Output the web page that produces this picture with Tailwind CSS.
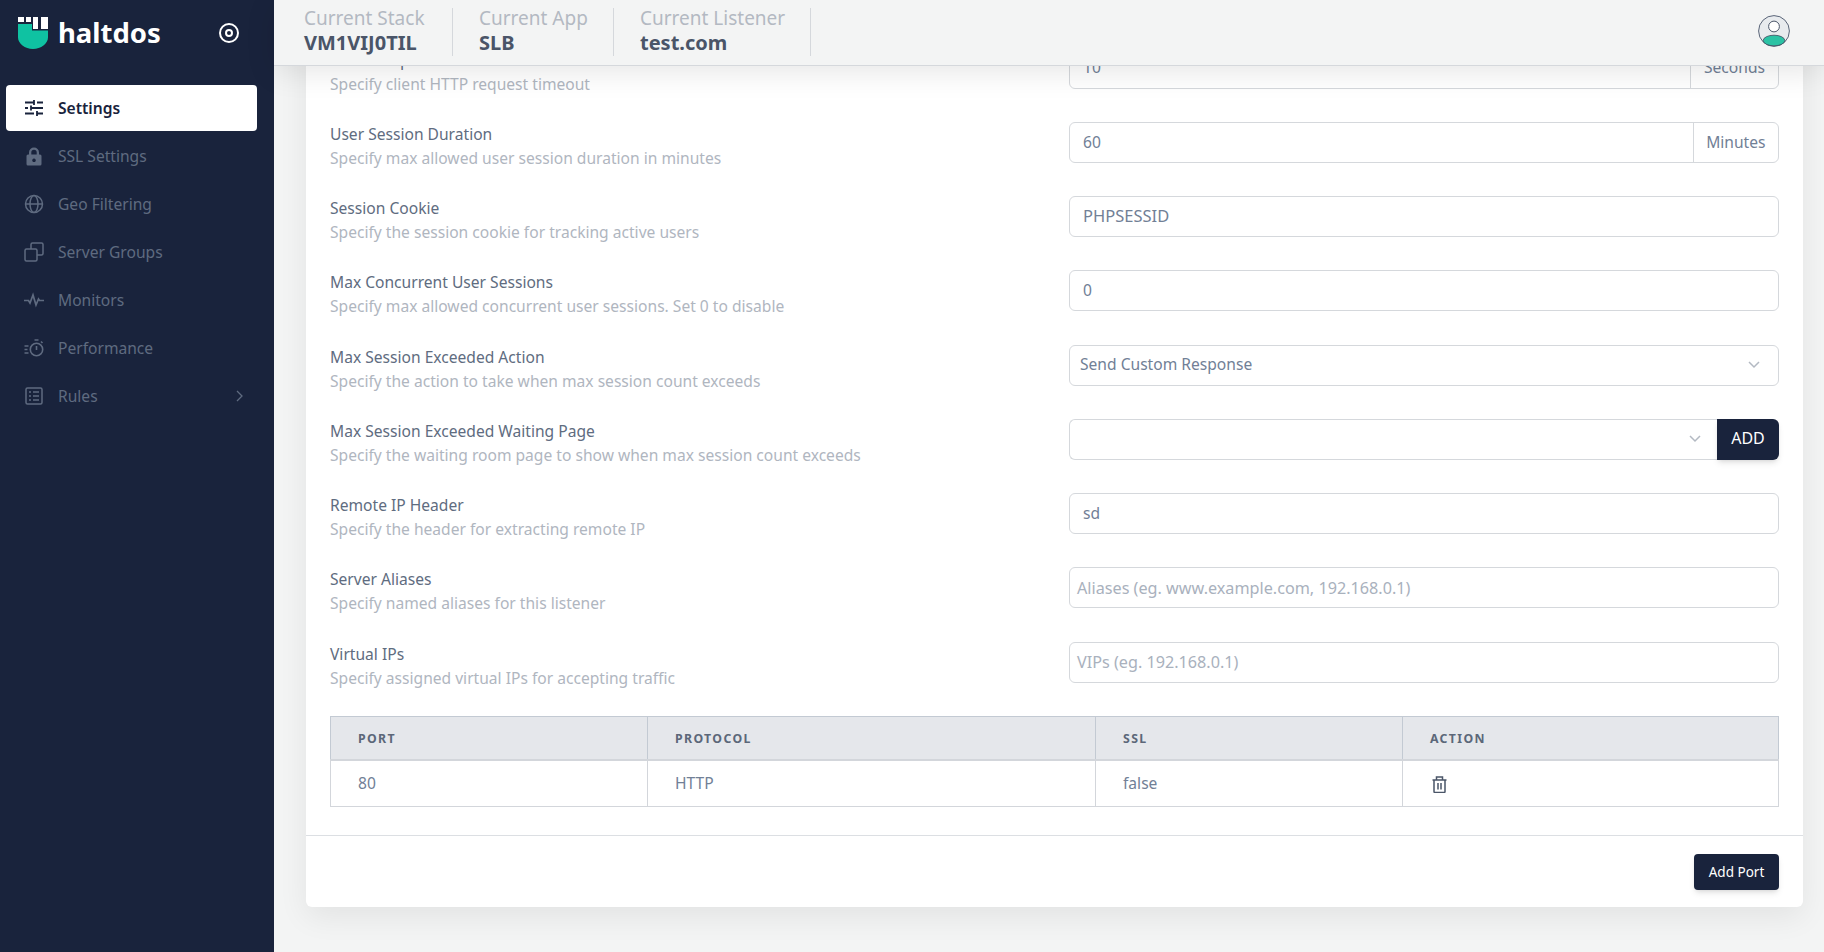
<!DOCTYPE html>
<html lang="en">
<head>
<meta charset="utf-8">
<title>Haltdos</title>
<script src="https://cdn.jsdelivr.net/npm/@tailwindcss/browser@4"></script>
</head>
<body class="font-['Noto_Sans',sans-serif] bg-[#f3f4f4] text-[#4a5568]">
<div class="flex h-[952px] w-[1824px] overflow-hidden">
  <aside class="w-[274px] shrink-0 bg-[#19233c] flex flex-col">
    <div class="h-[65px] flex items-center pl-[17px] pr-[34px]">
      <svg class="w-[32px] h-[34px]" viewBox="0 0 32 34"><path d="M1 1h6v5H1zM9 1h5v5H9zM16 1h5v12h-5zM24 1h7v12h-7z" fill="#fff"/><path d="M1 8h14v6.500h16v7c0 6-7 11.500-15 11.500S1 27.500 1 21.500z" fill="#0fc2a2"/></svg>
      <span class="ml-[9px] text-[27.500px] font-bold text-white leading-none">haltdos</span>
      <svg class="ml-auto w-[22px] h-[22px]" viewBox="0 0 22 22" fill="none" stroke="#fff" stroke-width="2"><circle cx="11" cy="11" r="9"/><circle cx="11" cy="11" r="3"/></svg>
    </div>
    <nav class="mt-[20px] px-[6px] flex flex-col gap-[2px] text-[15.600px] text-[#5f6b80]">
      <a class="h-[46px] w-[251px] rounded bg-white flex items-center px-[18px] gap-[14px] font-semibold text-[#19233c]">
        <svg class="w-[20px] h-[20px]" viewBox="0 0 20 20" fill="none" stroke="currentColor" stroke-width="1.800"><path d="M1 4.500h9M13 4.500h6M10 2v5M1 10h3M7 10h12M7 7.500v5M1 15.500h9M13 15.500h6M13 13v5"/></svg>
        <span class="pt-[1px]">Settings</span></a>
      <a class="h-[46px] flex items-center px-[18px] gap-[14px]">
        <svg class="w-[20px] h-[20px]" viewBox="0 0 20 20" fill="currentColor"><path fill-rule="evenodd" d="M5 8.500V6.500a5 5 0 0 1 10 0v2h1a1.500 1.500 0 0 1 1.500 1.500v8a1.500 1.500 0 0 1-1.500 1.500H4A1.500 1.500 0 0 1 2.500 18v-8A1.500 1.500 0 0 1 4 8.500zm2.300 0h5.400v-2a2.700 2.700 0 0 0-5.400 0zm2.700 4a1.800 1.800 0 1 0 .01 0z"/></svg>
        <span class="pt-[1px]">SSL Settings</span></a>
      <a class="h-[46px] flex items-center px-[18px] gap-[14px]">
        <svg class="w-[20px] h-[20px]" viewBox="0 0 20 20" fill="none" stroke="currentColor" stroke-width="1.500"><circle cx="10" cy="10" r="8.500"/><ellipse cx="10" cy="10" rx="4" ry="8.500"/><path d="M1.500 10h17"/></svg>
        <span class="pt-[1px]">Geo Filtering</span></a>
      <a class="h-[46px] flex items-center px-[18px] gap-[14px]">
        <svg class="w-[20px] h-[20px]" viewBox="0 0 20 20" fill="none" stroke="currentColor" stroke-width="1.500"><rect x="1" y="7" width="12" height="12" rx="1.500"/><path d="M7 7V2.500A1.500 1.500 0 0 1 8.500 1h9A1.500 1.500 0 0 1 19 2.500v9a1.500 1.500 0 0 1-1.500 1.500H13"/></svg>
        <span class="pt-[1px]">Server Groups</span></a>
      <a class="h-[46px] flex items-center px-[18px] gap-[14px]">
        <svg class="w-[20px] h-[20px]" viewBox="0 0 20 20" fill="none" stroke="currentColor" stroke-width="1.700"><path d="M0 10.500h4.500l1.500 2.500 3-8 3 10 2.500-6 1 1.500h4.500"/></svg>
        <span class="pt-[1px]">Monitors</span></a>
      <a class="h-[46px] flex items-center px-[18px] gap-[14px]">
        <svg class="w-[20px] h-[20px]" viewBox="0 0 20 20" fill="none" stroke="currentColor" stroke-width="1.600"><circle cx="12.500" cy="11.500" r="6.200"/><path d="M12.500 8v4M10.500 2h4M17 3.500l1.500 1.500M0.500 8h4M0.500 11.500h3M0.500 15h4"/></svg>
        <span class="pt-[1px]">Performance</span></a>
      <a class="h-[46px] flex items-center px-[18px] gap-[14px]">
        <svg class="w-[20px] h-[20px]" viewBox="0 0 20 20" fill="none" stroke="currentColor" stroke-width="1.500"><rect x="2" y="2" width="16" height="16" rx="1.500"/><path d="M5 6h2M9 6h6M5 10h2M9 10h6M5 14h2M9 14h6"/></svg>
        <span class="pt-[1px]">Rules</span>
        <svg class="ml-auto mr-[5px] w-[10px] h-[14px]" viewBox="0 0 10 14" fill="none" stroke="currentColor" stroke-width="1.300"><path d="M2 2l5 5-5 5"/></svg>
      </a>
    </nav>
  </aside>
  <main class="flex-1 min-w-0 flex flex-col">
    <header class="relative z-10 h-[66px] shrink-0 bg-[#f3f4f4] border-b border-[#d5d8dc] shadow-[0_6px_30px_rgba(0,0,0,0.1)] flex items-start pl-[30px] pr-[34px]">
      <div class="mt-[8px] h-[48px] w-[149px] border-r border-[#d5d8dc] leading-none">
        <div class="text-[19px] leading-[21px] text-[#b3b9c2] h-[25px]">Current Stack</div>
        <div class="text-[20px] font-bold text-[#4a5568]">VM1VIJ0TIL</div>
      </div>
      <div class="mt-[8px] h-[48px] w-[161px] pl-[26px] border-r border-[#d5d8dc] leading-none">
        <div class="text-[19px] leading-[21px] text-[#b3b9c2] h-[25px]">Current App</div>
        <div class="text-[20px] font-bold text-[#4a5568]">SLB</div>
      </div>
      <div class="mt-[8px] h-[48px] w-[197px] pl-[26px] border-r border-[#d5d8dc] leading-none">
        <div class="text-[19px] leading-[21px] text-[#b3b9c2] h-[25px]">Current Listener</div>
        <div class="text-[20px] font-bold text-[#4a5568]">test.com</div>
      </div>
      <svg class="ml-auto mt-[15px] w-[32px] h-[32px]" viewBox="0 0 32 32"><circle cx="16" cy="16" r="15.400" fill="#e8ebee" stroke="#5a6578" stroke-width="1"/><ellipse cx="16" cy="25.500" rx="10.800" ry="5.300" fill="#2bc2a4" stroke="#3d4a5e" stroke-width="0.800"/><circle cx="16" cy="11.500" r="5.400" fill="#fff" stroke="#4a5568" stroke-width="1"/></svg>
    </header>
    <div class="flex-1 min-h-0 overflow-hidden pl-[32px] pr-[21px]">
      <section class="mt-[-45px] h-[886px] bg-white rounded-md shadow-[0_10px_30px_rgba(0,0,0,0.07)]">
        <div class="h-[815px] px-[24px] pt-[26.600px] border-b border-[#dcdfe3]">
          <div class="flex flex-col gap-[32.270px] text-[15.600px]">
            <div class="flex h-[42px] items-start"><div class="w-[739px]"><div class="text-[#606c80] leading-[24px]">Client Request Timeout</div><div class="text-[#b0b6bf] leading-[24px]">Specify client HTTP request timeout</div></div><div class="flex-1 flex h-[41px] border border-[#d5d8dc] rounded-md text-[#718096]"><div class="flex-1 px-[13px] flex items-center">10</div><div class="px-[13px] border-l border-[#d5d8dc] flex items-center">Seconds</div></div></div>
            <div class="flex h-[42px] items-start"><div class="w-[739px]"><div class="text-[#606c80] leading-[24px]">User Session Duration</div><div class="text-[#b0b6bf] leading-[24px]">Specify max allowed user session duration in minutes</div></div><div class="flex-1 flex h-[41px] border border-[#d5d8dc] rounded-md text-[#718096]"><div class="flex-1 px-[13px] flex items-center">60</div><div class="px-[12.500px] border-l border-[#d5d8dc] flex items-center">Minutes</div></div></div>
            <div class="flex h-[42px] items-start"><div class="w-[739px]"><div class="text-[#606c80] leading-[24px]">Session Cookie</div><div class="text-[#b0b6bf] leading-[24px]">Specify the session cookie for tracking active users</div></div><div class="flex-1 flex items-center h-[41px] px-[13px] border border-[#d5d8dc] rounded-md text-[#718096] text-[16.500px]">PHPSESSID</div></div>
            <div class="flex h-[42px] items-start"><div class="w-[739px]"><div class="text-[#606c80] leading-[24px]">Max Concurrent User Sessions</div><div class="text-[#b0b6bf] leading-[24px]">Specify max allowed concurrent user sessions. Set 0 to disable</div></div><div class="flex-1 flex items-center h-[41px] px-[13px] border border-[#d5d8dc] rounded-md text-[#718096]">0</div></div>
            <div class="flex h-[42px] items-start"><div class="w-[739px]"><div class="text-[#606c80] leading-[24px]">Max Session Exceeded Action</div><div class="text-[#b0b6bf] leading-[24px]">Specify the action to take when max session count exceeds</div></div><div class="flex-1 flex items-center h-[41px] px-[10px] border border-[#d5d8dc] rounded-md text-[#718096]">Send Custom Response<svg class="ml-auto mr-[7px] w-[14px] h-[10px]" viewBox="0 0 14 10" fill="none" stroke="#b3b9c2" stroke-width="1.500"><path d="M2 2l5 5 5-5"/></svg></div></div>
            <div class="flex h-[42px] items-start"><div class="w-[739px]"><div class="text-[#606c80] leading-[24px]">Max Session Exceeded Waiting Page</div><div class="text-[#b0b6bf] leading-[24px]">Specify the waiting room page to show when max session count exceeds</div></div><div class="flex-1 flex h-[41px]"><div class="flex-1 flex items-center border border-r-0 border-[#d5d8dc] rounded-l-md"><svg class="ml-auto mr-[15px] w-[14px] h-[10px]" viewBox="0 0 14 10" fill="none" stroke="#b3b9c2" stroke-width="1.500"><path d="M2 2l5 5 5-5"/></svg></div><button class="w-[62px] pb-[2px] bg-[#19233c] text-white text-[16px] rounded-r-md shadow-md">ADD</button></div></div>
            <div class="flex h-[42px] items-start"><div class="w-[739px]"><div class="text-[#606c80] leading-[24px]">Remote IP Header</div><div class="text-[#b0b6bf] leading-[24px]">Specify the header for extracting remote IP</div></div><div class="flex-1 flex items-center h-[41px] px-[13px] border border-[#d5d8dc] rounded-md text-[#718096]">sd</div></div>
            <div class="flex h-[42px] items-start"><div class="w-[739px]"><div class="text-[#606c80] leading-[24px]">Server Aliases</div><div class="text-[#b0b6bf] leading-[24px]">Specify named aliases for this listener</div></div><div class="flex-1 flex items-center h-[41px] px-[7px] border border-[#d5d8dc] rounded-md text-[#a9b1bd] text-[16.200px]">Aliases (eg. www.example.com, 192.168.0.1)</div></div>
            <div class="flex h-[42px] items-start"><div class="w-[739px]"><div class="text-[#606c80] leading-[24px]">Virtual IPs</div><div class="text-[#b0b6bf] leading-[24px]">Specify assigned virtual IPs for accepting traffic</div></div><div class="flex-1 flex items-center h-[41px] px-[7px] border border-[#d5d8dc] rounded-md text-[#a9b1bd] text-[16.200px]">VIPs (eg. 192.168.0.1)</div></div>
          </div>
          <table class="mt-[32.400px] w-full table-fixed border-collapse text-[15.600px]">
            <thead>
              <tr class="h-[43px] bg-[#e5e7eb] text-[12.300px] font-bold tracking-[0.11em] text-[#5c6779] text-left">
                <th class="w-[317px] pl-[27px] pt-[2px] border border-[#c3cad3]">PORT</th>
                <th class="w-[448px] pl-[27px] pt-[2px] border border-[#c3cad3]">PROTOCOL</th>
                <th class="w-[307px] pl-[27px] pt-[2px] border border-[#c3cad3]">SSL</th>
                <th class="pl-[27px] pt-[2px] border border-[#c3cad3]">ACTION</th>
              </tr>
            </thead>
            <tbody>
              <tr class="h-[47px] text-[#718096]">
                <td class="pl-[27px] border border-[#d3d6db] border-t-2">80</td>
                <td class="pl-[27px] border border-[#d3d6db] border-t-2">HTTP</td>
                <td class="pl-[27px] border border-[#d3d6db] border-t-2">false</td>
                <td class="pl-[27px] border border-[#d3d6db] border-t-2"><svg class="ml-[2px] mt-[2px] w-[15px] h-[17px]" viewBox="0 0 15 17" fill="none" stroke="#4a5568" stroke-width="1.500"><path d="M0.500 4h14M4.500 4V1h6v3M2 4v11.500a1 1 0 0 0 1 1h9a1 1 0 0 0 1-1V4M6 7v6.500M9 7v6.500"/></svg></td>
              </tr>
            </tbody>
          </table>
        </div>
        <div class="flex justify-end pr-[24px] pt-[18px]">
          <button class="w-[85px] h-[36px] rounded bg-[#19233c] text-white text-[13.500px] shadow-md">Add Port</button>
        </div>
      </section>
    </div>
  </main>
</div>
</body>
</html>
